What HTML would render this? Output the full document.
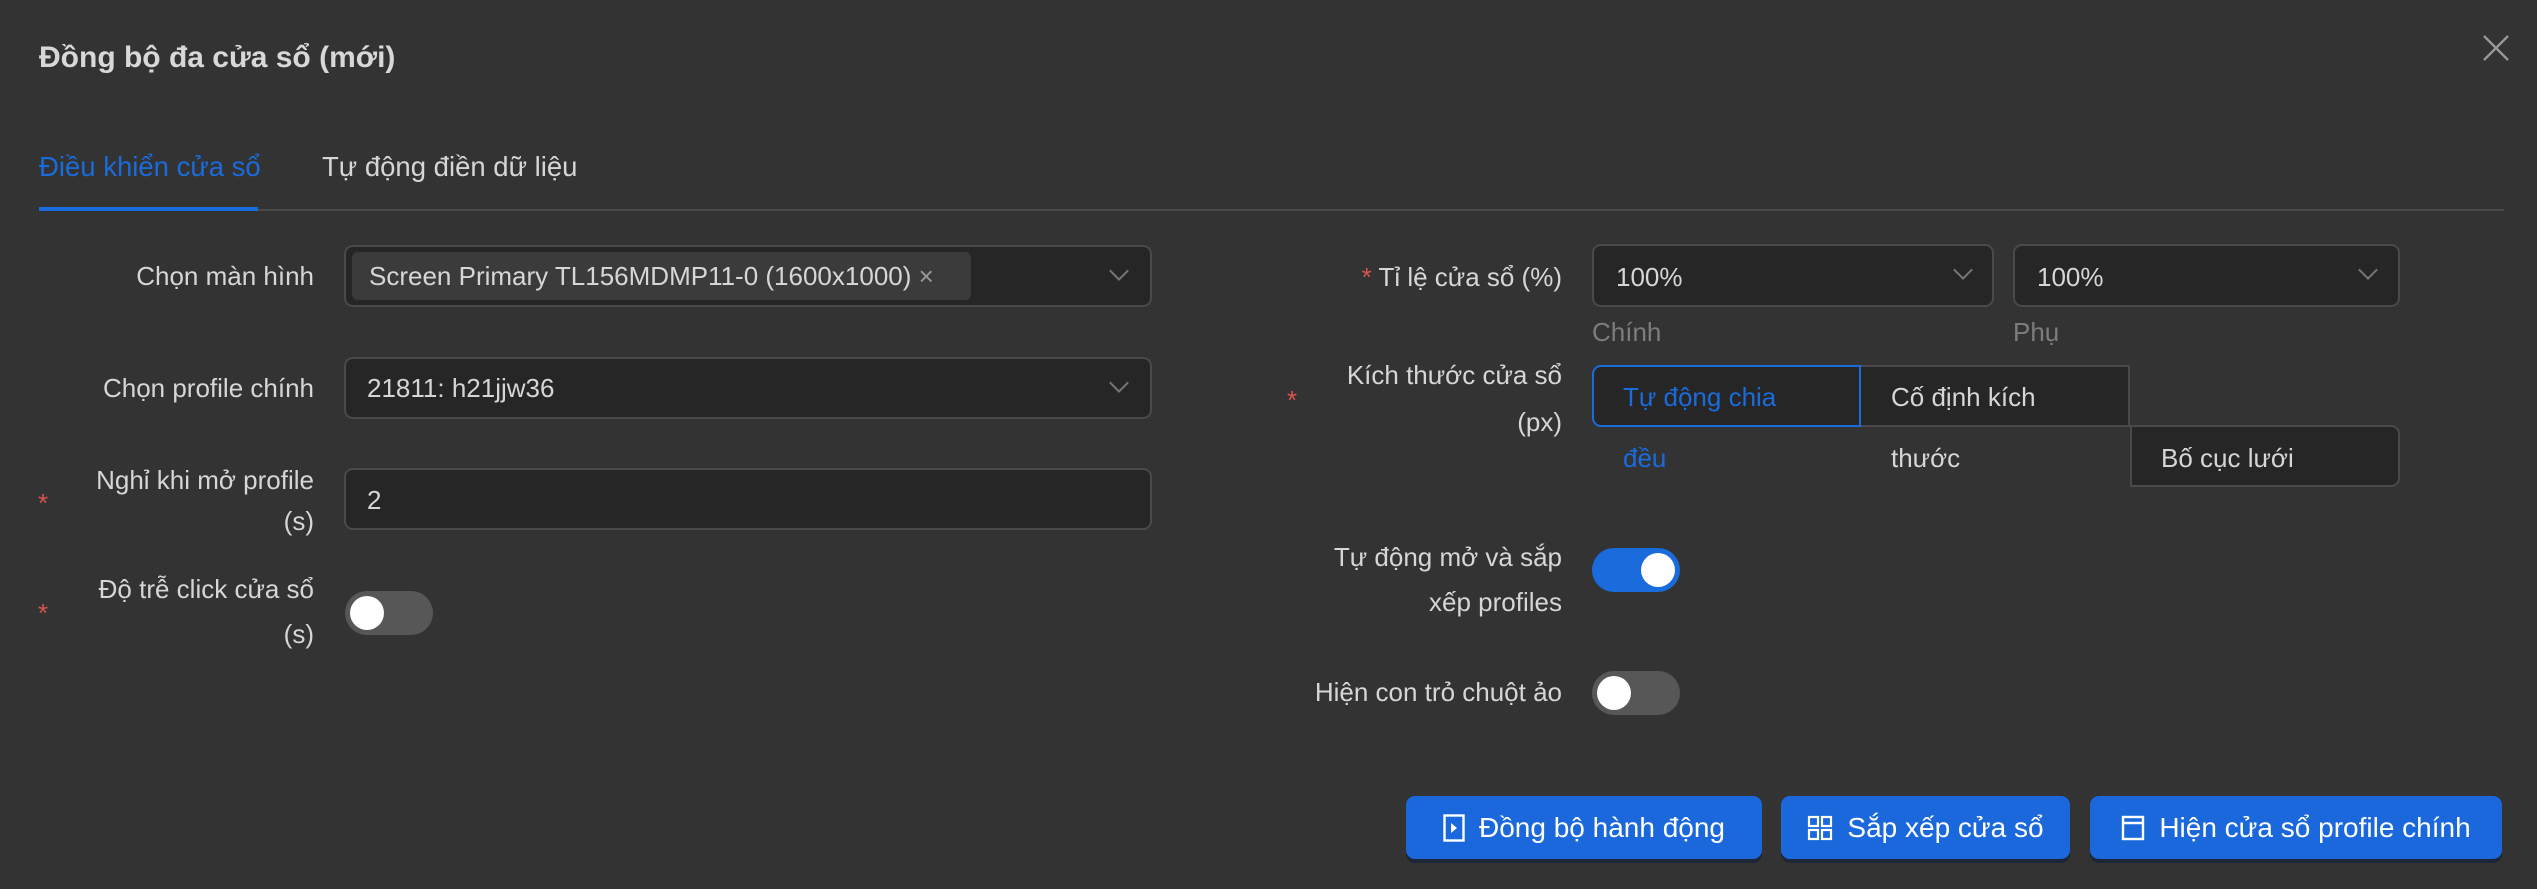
<!DOCTYPE html>
<html><head><meta charset="utf-8"><style>
*{box-sizing:border-box;margin:0;padding:0}
body{width:2537px;height:889px;background:#333333;font-family:"Liberation Sans","DejaVu Sans",sans-serif;color:#d6d6d6;position:relative;overflow:hidden;font-size:26px}
.a{position:absolute;white-space:nowrap}
.r{text-align:right}
.inp{position:absolute;background:#262626;border:2px solid #4a4a4a;border-radius:9px}
.chev{position:absolute;width:14px;height:14px;border-right:2px solid #777;border-bottom:2px solid #777;transform:rotate(45deg)}
.star{color:#d9534f}
.tog{position:absolute;width:88px;height:44px;border-radius:22px;background:#575757}
.tog i{position:absolute;top:5px;left:5px;width:34px;height:34px;border-radius:50%;background:#fff}
.tog.on{background:#1a6bdc}.tog.on i{left:49px}
.btn{position:absolute;background:#1a68dc;border-radius:9px;color:#fff;font-size:28px;height:63px;line-height:63px;box-shadow:0 4px 0 #1d2636;display:flex;align-items:center;justify-content:center;gap:14px}
</style></head><body>
<div class="a" style="left:39px;top:41px;font-size:30px;font-weight:bold;color:#d8d8d8">Đồng bộ đa cửa sổ (mới)</div>
<svg class="a" style="left:2482px;top:34px" width="28" height="28" viewBox="0 0 28 28"><path d="M2 2L26 26M26 2L2 26" stroke="#999" stroke-width="2.4"/></svg>

<div class="a" style="left:39px;top:151px;color:#1a6bdc;font-size:27.5px">Điều khiển cửa sổ</div>
<div class="a" style="left:322px;top:151px;font-size:27.5px">Tự động điền dữ liệu</div>
<div class="a" style="left:39px;top:209px;width:2465px;height:2px;background:#4a4a4a"></div>
<div class="a" style="left:39px;top:207px;width:219px;height:4px;background:#1a6bdc"></div>

<div class="a r" style="right:2223px;top:261px">Chọn màn hình</div>
<div class="inp" style="left:344px;top:245px;width:808px;height:62px"></div>
<div class="a" style="left:352px;top:252px;width:619px;height:48px;background:#3b3b3b;border-radius:6px"></div>
<div class="a" style="left:369px;top:261px">Screen Primary TL156MDMP11-0 (1600x1000) <span style="color:#999">×</span></div>
<div class="chev" style="left:1112px;top:264px"></div>

<div class="a r" style="right:2223px;top:373px">Chọn profile chính</div>
<div class="inp" style="left:344px;top:357px;width:808px;height:62px"></div>
<div class="a" style="left:367px;top:373px">21811: h21jjw36</div>
<div class="chev" style="left:1112px;top:376px"></div>

<div class="a star" style="left:38px;top:488px">*</div>
<div class="a r" style="right:2223px;top:465px">Nghỉ khi mở profile</div>
<div class="a r" style="right:2223px;top:506px">(s)</div>
<div class="inp" style="left:344px;top:468px;width:808px;height:62px"></div>
<div class="a" style="left:367px;top:485px">2</div>

<div class="a star" style="left:38px;top:598px">*</div>
<div class="a r" style="right:2223px;top:574px">Độ trễ click cửa sổ</div>
<div class="a r" style="right:2223px;top:619px">(s)</div>
<div class="tog" style="left:345px;top:591px"><i></i></div>

<div class="a r" style="right:975px;top:262px"><span class="star">*</span> Tỉ lệ cửa sổ (%)</div>
<div class="inp" style="left:1592px;top:244px;width:402px;height:63px"></div>
<div class="a" style="left:1616px;top:262px">100%</div>
<div class="chev" style="left:1956px;top:263px"></div>
<div class="inp" style="left:2013px;top:244px;width:387px;height:63px"></div>
<div class="a" style="left:2037px;top:262px">100%</div>
<div class="chev" style="left:2361px;top:263px"></div>
<div class="a" style="left:1592px;top:317px;color:#7d7d7d">Chính</div>
<div class="a" style="left:2013px;top:317px;color:#7d7d7d">Phụ</div>

<div class="a star" style="left:1287px;top:385px">*</div>
<div class="a r" style="right:975px;top:360px">Kích thước cửa sổ</div>
<div class="a r" style="right:975px;top:407px">(px)</div>
<div class="a" style="left:1860px;top:365px;width:270px;height:62px;background:#262626;border:2px solid #4a4a4a;border-left:none"></div>
<div class="a" style="left:2130px;top:425px;width:270px;height:62px;background:#262626;border:2px solid #4a4a4a;border-radius:0 9px 9px 0"></div>
<div class="a" style="left:1592px;top:365px;width:269px;height:62px;background:#262626;border:2px solid #1a6bdc;border-radius:9px 0 0 9px"></div>
<div class="a" style="left:1623px;top:382px;color:#1a6bdc">Tự động chia</div>
<div class="a" style="left:1623px;top:443px;color:#1a6bdc">đều</div>
<div class="a" style="left:1891px;top:382px">Cố định kích</div>
<div class="a" style="left:1891px;top:443px">thước</div>
<div class="a" style="left:2161px;top:443px">Bố cục lưới</div>

<div class="a r" style="right:975px;top:542px">Tự động mở và sắp</div>
<div class="a r" style="right:975px;top:587px">xếp profiles</div>
<div class="tog on" style="left:1592px;top:548px"><i></i></div>
<div class="a r" style="right:975px;top:677px">Hiện con trỏ chuột ảo</div>
<div class="tog" style="left:1592px;top:671px"><i></i></div>

<div class="btn" style="left:1406px;top:796px;width:356px"><svg width="22" height="28" viewBox="0 0 22 28"><rect x="1.5" y="1.5" width="19" height="25" fill="none" stroke="#fff" stroke-width="2.4"/><path d="M8 9L14 14L8 19Z" fill="#fff"/></svg>Đồng bộ hành động</div>
<div class="btn" style="left:1781px;top:796px;width:289px"><svg width="26" height="26" viewBox="0 0 26 26" fill="none" stroke="#fff" stroke-width="2.2"><rect x="2" y="2" width="9" height="9"/><rect x="15" y="2" width="9" height="9"/><rect x="2" y="15" width="9" height="9"/><rect x="15" y="15" width="9" height="9"/></svg>Sắp xếp cửa sổ</div>
<div class="btn" style="left:2090px;top:796px;width:412px"><svg width="24" height="26" viewBox="0 0 24 26" fill="none" stroke="#fff" stroke-width="2.4"><rect x="2" y="2" width="20" height="22"/><path d="M2 8H22"/></svg>Hiện cửa sổ profile chính</div>
</body></html>
